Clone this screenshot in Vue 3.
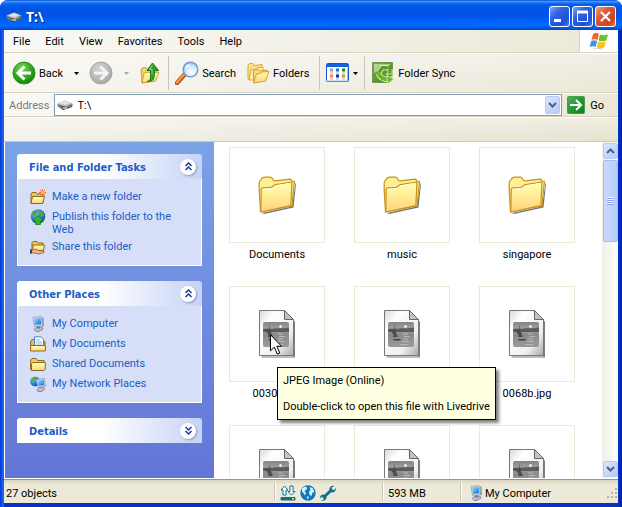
<script setup>
import { ref } from 'vue'

const menus = ['File', 'Edit', 'View', 'Favorites', 'Tools', 'Help']
const address = ref('T:\\')

const panels = [
  {
    title: 'File and Folder Tasks',
    open: true,
    items: [
      { icon: 'new-folder', text: 'Make a new folder' },
      { icon: 'publish', text: 'Publish this folder to the Web' },
      { icon: 'share', text: 'Share this folder' },
    ],
  },
  {
    title: 'Other Places',
    open: true,
    items: [
      { icon: 'computer', text: 'My Computer' },
      { icon: 'documents', text: 'My Documents' },
      { icon: 'shared', text: 'Shared Documents' },
      { icon: 'network', text: 'My Network Places' },
    ],
  },
  { title: 'Details', open: false, items: [] },
]

const files = [
  { name: 'Documents', type: 'folder' },
  { name: 'music', type: 'folder' },
  { name: 'singapore', type: 'folder' },
  { name: '0030b.jpg', type: 'jpeg', hovered: true },
  { type: 'jpeg' },
  { name: '0068b.jpg', type: 'jpeg' },
  { type: 'jpeg' },
  { type: 'jpeg' },
  { type: 'jpeg' },
]
</script>

<template>
  <svg class="sprite" aria-hidden="true">
    <defs>
      <linearGradient id="g-folder" x1="0" y1="0" x2="0" y2="1">
        <stop offset="0" stop-color="#ffffb8" /><stop offset="0.4" stop-color="#fff09a" /><stop offset="1" stop-color="#ffd27a" />
      </linearGradient>
      <linearGradient id="g-page" x1="0" y1="0" x2="1" y2="1">
        <stop offset="0" stop-color="#d8d8d8" /><stop offset="0.25" stop-color="#ffffff" /><stop offset="0.7" stop-color="#f0f0f0" /><stop offset="1" stop-color="#a8a8a8" />
      </linearGradient>
      <linearGradient id="g-photo" x1="0" y1="0" x2="0" y2="1">
        <stop offset="0" stop-color="#838383" /><stop offset="0.3" stop-color="#a4a4a4" /><stop offset="0.5" stop-color="#8a8a8a" /><stop offset="1" stop-color="#9a9a9a" />
      </linearGradient>
      <radialGradient id="g-green" cx="0.4" cy="0.3" r="0.75">
        <stop offset="0" stop-color="#7fd862" /><stop offset="0.5" stop-color="#37b021" /><stop offset="1" stop-color="#0f7e0d" />
      </radialGradient>
      <radialGradient id="g-gray" cx="0.4" cy="0.3" r="0.8">
        <stop offset="0" stop-color="#d4d4d2" /><stop offset="1" stop-color="#a3a3a1" />
      </radialGradient>
      <radialGradient id="g-lens" cx="0.6" cy="0.7" r="0.8">
        <stop offset="0" stop-color="#ffffff" /><stop offset="0.5" stop-color="#cfeaff" /><stop offset="1" stop-color="#79b5f0" />
      </radialGradient>
      <linearGradient id="g-screen" x1="0" y1="0" x2="1" y2="1">
        <stop offset="0" stop-color="#a8e0ff" /><stop offset="0.6" stop-color="#3b9df2" /><stop offset="1" stop-color="#1762d8" />
      </linearGradient>
      <radialGradient id="g-earth" cx="0.35" cy="0.3" r="0.8">
        <stop offset="0" stop-color="#7ac6f8" /><stop offset="0.6" stop-color="#2271cf" /><stop offset="1" stop-color="#0d3f8c" />
      </radialGradient>
      <linearGradient id="g-sync" x1="0" y1="0" x2="1" y2="1">
        <stop offset="0" stop-color="#7fae45" /><stop offset="1" stop-color="#3f8418" />
      </linearGradient>
      <linearGradient id="g-go" x1="0" y1="0" x2="1" y2="1">
        <stop offset="0" stop-color="#4fae5e" /><stop offset="0.6" stop-color="#1c9727" /><stop offset="1" stop-color="#0b7d12" />
      </linearGradient>
    </defs>

    <symbol id="i-drive" viewBox="0 0 16 16">
      <path d="M1 9l5 4 9-3v-2L10 6z" fill="#26282b" />
      <path d="M0.5 6.5L8 3.5l7.5 3-5.5 3.5-5-1z" fill="#b6b8ba" />
      <path d="M1.5 6.5L8 4l5.500 2-5 2z" fill="#e1e2e2" />
      <path d="M0.5 6.6l4.5 2.9v2.700L0.5 9z" fill="#77797c" />
      <path d="M5 9.5l5 .6 5.5-3.400v2.500L10 12l-5 .2z" fill="#65676a" />
      <path d="M6 11h4" stroke="#f4f4f4" />
      <path d="M12 9.5h1.5" stroke="#4fd13a" />
    </symbol>

    <symbol id="i-flag" viewBox="0 0 20 18">
      <path d="M4 2C6 .8 8 .8 10 2L8.500 8C6.500 7 4.500 7 2.500 8z" fill="#f0652b" />
      <path d="M11 2.500c2 1 4 1 8 0L17.300 8.600c-2.600 1-5 1-7.800-.2z" fill="#72bf2e" />
      <path d="M2.200 9c2-1 4-1 6 .1L6.600 15C4.800 14 2.600 14 .5 15z" fill="#3f93e8" />
      <path d="M9.200 9.500c2.500 1 5 1 7.700.1l-1.600 5.900c-2.500 1-5 1.400-7.700-.2z" fill="#fac31d" />
      <path d="M4 17c3-1 6-1 9 .5" stroke="#b9b9b9" stroke-width=".7" fill="none" />
    </symbol>

    <symbol id="i-back" viewBox="0 0 24 24">
      <circle cx="12" cy="12" r="11" fill="url(#g-green)" stroke="#2b8c21" />
      <path d="M12.500 5.500L6 12l6.500 6.500M6.500 12H19" fill="none" stroke="#fff" stroke-width="3" />
    </symbol>
    <symbol id="i-forward" viewBox="0 0 24 24">
      <circle cx="12" cy="12" r="11" fill="url(#g-gray)" stroke="#a5a5a3" />
      <path d="M11.500 5.500L18 12l-6.500 6.500M17.500 12H5" fill="none" stroke="#f5f5f3" stroke-width="3" />
    </symbol>
    <symbol id="i-up" viewBox="0 0 24 24">
      <path d="M3 8.500l1-1.500 4-.5 2 2 9-1-1.500 12L4 22z" fill="#f4d267" stroke="#d0a030" />
      <path d="M4 22l2-10 5-1 1.500 1.500L21 11l-3.500 9z" fill="url(#g-folder)" stroke="#d0a030" />
      <path d="M9 20.500c4-.5 3.500-3 3.500-11H9L14.500 2l6 7.500h-4c0 8-.5 11-7.500 11z" fill="#2fa02b" stroke="#17731a" />
      <path d="M14.500 4l-3 4.500H14v5" fill="none" stroke="#8ade78" />
    </symbol>
    <symbol id="i-search" viewBox="0 0 24 24">
      <path d="M2 22l8-9" stroke="#a84f18" stroke-width="4.500" stroke-linecap="round" />
      <path d="M2 21.500l7-8" stroke="#f29a4a" stroke-width="2.500" stroke-linecap="round" />
      <circle cx="15.500" cy="8.500" r="7.300" fill="url(#g-lens)" stroke="#7998cf" stroke-width="1.500" />
      <path d="M11 7.500c.5-2 2-3.500 4-3.500" stroke="#fff" stroke-width="1.500" fill="none" />
    </symbol>
    <symbol id="i-folders" viewBox="0 0 24 24">
      <path d="M2 18V4l1.500-1.500H7L8.500 4.500 16 3.500V9L4 18z" fill="#fbe08a" stroke="#dba93a" />
      <path d="M3 19L5 9l4-.5L10.500 7 17 6v4L8 19z" fill="#fff0ac" stroke="#dba93a" />
      <path d="M7.500 21V10L9 8.500h3.500l1.500 1.500 7-1V12L10 21z" fill="#f9d974" stroke="#d49f30" />
      <path d="M7.500 22L10.500 13l4-.5 1.500-1.500 7-.5L19.500 20z" fill="url(#g-folder)" stroke="#d49f30" />
    </symbol>
    <symbol id="i-views" viewBox="0 0 24 20">
      <rect x=".5" y=".5" width="22" height="18" rx="1" fill="#fff" stroke="#1656c8" />
      <path d="M1 1h21v3H1z" fill="#175fdc" />
      <path d="M21.500 5v13H2" stroke="#9bbcf2" fill="none" />
      <path d="M4 5.500h3v3H4z" fill="#9696cc" /><path d="M10 5.500h3v3h-3z" fill="#0d78d8" /><path d="M16 5.500h3v3h-3z" fill="#0e8a12" />
      <path d="M4 11.500h3v3H4z" fill="#ff7d51" /><path d="M10 11.500h3v3h-3z" fill="#0931a0" /><path d="M16 11.500h3v3h-3z" fill="#d4a000" />
      <path d="M4 10h3M10 10h3M16 10h3M4 16h3M10 16h3M16 16h3" stroke="#b5b5b5" />
    </symbol>
    <symbol id="i-sync" viewBox="0 0 24 24">
      <path d="M1.500 1.500h20v13l-4 7h-16z" fill="url(#g-sync)" stroke="#6f9550" />
      <path d="M3 3h17l-4 2.500H9l-6 7z" fill="#cfe3b4" opacity=".7" />
      <path d="M7.500 12l4-5.500 6 .5" fill="none" stroke="#f0f8e2" stroke-width="5" />
      <path d="M7.500 12l4-5.500 6 .5" fill="none" stroke="#5a9f22" stroke-width="3.400" />
      <path d="M19 8v6" fill="none" stroke="#f0f8e2" stroke-width="5" />
      <path d="M19 7v7" fill="none" stroke="#5a9f22" stroke-width="3.400" />
      <path d="M14.500 13h8.500l-4 4z" fill="#5a9f22" stroke="#f0f8e2" stroke-width=".7" />
      <path d="M7.500 12.500c1.500 4 4.500 6 10 6" fill="none" stroke="#f0f8e2" stroke-width="5.500" />
      <path d="M7.500 12.500c1.500 4 4.500 6 10 6" fill="none" stroke="#6db22e" stroke-width="4" />
      <path d="M16 14.500l7 3.500-6.500 5z" fill="#6db22e" stroke="#f0f8e2" stroke-width=".7" />
    </symbol>

    <symbol id="i-new-folder" viewBox="0 0 16 16">
      <path d="M1 14V5l1-1.500h4L7.500 5H13v9z" fill="#e9c65a" stroke="#8a6a1c" />
      <path d="M1 14.500L2.500 7.500H14.500L12.500 14.500z" fill="url(#g-folder)" stroke="#8a6a1c" />
      <path d="M12.500 0v7M9 3.500h7M10 1l5 5M15 1l-5 5" stroke="#f0643c" />
      <circle cx="12.500" cy="3.500" r="1.500" fill="#ffd23c" />
    </symbol>
    <symbol id="i-publish" viewBox="0 0 16 16">
      <circle cx="8" cy="7.500" r="7.300" fill="url(#g-earth)" />
      <path d="M2 3l4-2 2 2-2 3-3 1zM9 2l4 1 1.500 4-3 1-3-3z" fill="#4da838" />
      <path d="M8 6.500l5.500 5.500h-3v3.500h-5V12h-3z" fill="#35b52d" stroke="#1b7a20" stroke-width=".8" />
    </symbol>
    <symbol id="i-share" viewBox="0 0 16 16">
      <path d="M2 11V3.500L3 2.500h4L8.500 4H13v7z" fill="#e9c65a" stroke="#8a6a1c" />
      <path d="M2 11.500L3.500 6H14.500l-1 5.500z" fill="url(#g-folder)" stroke="#8a6a1c" />
      <path d="M0 11h3l2-1 4 1.500 5 .5v1.500L9 15l-4-1H0z" fill="#eeb58a" stroke="#7b4a28" stroke-width=".7" />
      <path d="M0 10.500h2v4H0z" fill="#364667" />
    </symbol>
    <symbol id="i-computer" viewBox="0 0 16 16">
      <path d="M3 1.500L11 .5l1.500 9-8 1z" fill="#d8dde8" stroke="#8b93a9" stroke-width=".7" />
      <path d="M4 2.500l6.300-.8 1 6.500-6.300.8z" fill="url(#g-screen)" />
      <path d="M12 1l1.500 1 .5 8-1.500.5z" fill="#8b93a9" />
      <path d="M4 13.500l3-2.500h5l1 2-4 2.500H6z" fill="#b8bdcd" stroke="#666f8a" stroke-width=".7" />
      <path d="M7 10.500h3v2H7z" fill="#717a96" />
    </symbol>
    <symbol id="i-documents" viewBox="0 0 16 16">
      <path d="M.6 14V5.500L2 3.500h3l1.500 2H15v8.500z" fill="#e5bd50" stroke="#8a6a1c" />
      <path d="M4.500 10V.8h6.500l2.500 2.500V10z" fill="#fff" stroke="#4f80c4" />
      <path d="M6 4h4M6 6h6M6 8h6" stroke="#6fa6e5" stroke-width=".8" />
      <path d="M.6 15V9.500H15.400V15z" fill="url(#g-folder)" stroke="#8a6a1c" />
    </symbol>
    <symbol id="i-shared" viewBox="0 0 16 16">
      <path d="M.6 13.500V4L2 2.500h4L7.500 4.500H14v9z" fill="#eccb66" stroke="#8a6a1c" />
      <path d="M1.500 14.500V8L3 6.500h12.300V13l-1.300 1.500z" fill="url(#g-folder)" stroke="#8a6a1c" />
    </symbol>
    <symbol id="i-network" viewBox="0 0 16 16">
      <circle cx="5" cy="5.500" r="4.800" fill="url(#g-earth)" />
      <path d="M1.500 3l3-2.500L6 2 4.500 5 3 6zM2 7l2 1v2z" fill="#54b53b" />
      <path d="M6 3.500l8.500-1 1 8-7.500 1z" fill="#e1e5ee" stroke="#7e88a4" stroke-width=".7" />
      <path d="M7.200 4.600l6.500-.8.7 5.500-5.700.8z" fill="url(#g-screen)" />
      <path d="M7 14l2.500-2.500h4l1 2-3 2H8z" fill="#b8bdcd" stroke="#666f8a" stroke-width=".7" />
    </symbol>

    <symbol id="i-folder" viewBox="0 0 38 38">
      <path d="M4 37l30-6.500L37.500 7l.5 1-2.500 23.500L6 38z" fill="#333" opacity=".7" />
      <path d="M2.500 36L1.200 14V7C1.500 5 2.200 4 3.200 3.500 4 1.500 5.500 1.200 7 1.200h5.500c1.700 0 2 1.500 3 3.300l1.500.3L32 3.200c1 0 1.500.5 1.500 1.800l3 .3L34 29.800z" fill="#ffee96" stroke="#c6931a" stroke-width="1.200" stroke-linejoin="round" />
      <path d="M3.200 13.500c.3-1.200 1-1.500 2-1.600l8-.6c1.500-.3 2.500-2.300 4.300-2.700L34 6 32.800 29.700 2.800 36z" fill="url(#g-folder)" stroke="#c6931a" stroke-width="1.200" stroke-linejoin="round" />
      <path d="M4.500 14c0-.7.500-1 1.200-1l8-.6c1.500-.3 2.500-2.300 4.300-2.700l13.500-2.200" fill="none" stroke="#fffddd" />
    </symbol>

    <symbol id="i-jpeg" viewBox="0 0 36 48">
      <path d="M2 46.500h32.500V10l1.500 2v35.500H3z" fill="#666" opacity=".85" />
      <path d="M.5.500h25l9 9v36H.5z" fill="url(#g-page)" stroke="#777" />
      <path d="M25.500.5v9h9z" fill="#c3c3c3" stroke="#666" />
      <rect x="4" y="12" width="26" height="25" rx="2" fill="url(#g-photo)" />
      <path d="M4 19c4-1 7 .5 11-.5s8 .5 15-1v4.500H4z" fill="#5c5c5c" />
      <path d="M10 14l3 13H9c1.500-4 1.500-9 1-13z" fill="#484848" />
      <path d="M5 19l6 1 3 7-3-.5z" fill="#4e4e4e" />
      <path d="M9 29h8l-1 1.500h-6z" fill="#444" />
      <circle cx="21.500" cy="16.500" r="1.300" fill="#fff" />
      <path d="M19 24h5M20 26.500h6M19 29h5M18 31.500h7M16 34.500h8" stroke="#b9b9b9" />
    </symbol>

    <symbol id="i-transfer" viewBox="0 0 16 16">
      <path d="M4.500 1L8 5H6v5H3V5H1zM11.500 10L8 6.500h2V1h3v5.500h2z" fill="#fff" stroke="#0e6f8d" />
      <rect x=".5" y="12" width="15" height="3.500" rx="1" fill="#0e6f8d" />
      <path d="M12 13h2v1.500h-2z" fill="#c8f36b" />
    </symbol>
    <symbol id="i-globe" viewBox="0 0 16 16">
      <circle cx="8" cy="8" r="7.700" fill="#1277b9" />
      <path d="M2 3.500l3-2 2.500 1.500L6 5 4.500 6 6 8l-1 2.500L3.500 8 2 6.500zM9.500 2l3 1 2 4-2 .5-1 3.500-2-1-.5-3 1.500-2zM7 11l2 1-1.500 3z" fill="#d9f1fb" />
    </symbol>
    <symbol id="i-wrench" viewBox="0 0 16 16">
      <path d="M3 13L12 4.500" stroke="#0e6f8d" stroke-width="3" />
      <path d="M14.500 1l-3 1.500.5 2 2 .8 2-2.300c.3 3-2 5-4.500 4.200L9.500 5C9 2 11.500-.3 14.500 1zM1 15.500l3-1-.3-2-1.700-1L0 13.500c-.3-3 2-4.500 4-4L6.500 12c.2 3-2.500 4.600-5.500 3.500z" fill="#0e6f8d" />
    </symbol>
  </svg>

  <div class="window">
    <header class="titlebar">
      <svg class="icon16"><use href="#i-drive" /></svg>
      <h1 class="title">T:\</h1>
      <button class="caption" aria-label="Minimize">
        <svg viewBox="0 0 19 19"><path d="M4 13.500h7" stroke="#fff" stroke-width="3" /></svg>
      </button>
      <button class="caption" aria-label="Maximize">
        <svg viewBox="0 0 19 19"><path d="M4.500 4v10.500h10V4" stroke="#fff" fill="none" /><path d="M4 5h11" stroke="#fff" stroke-width="3" /></svg>
      </button>
      <button class="caption close" aria-label="Close">
        <svg viewBox="0 0 19 19"><path d="M5 5l9 9M14 5l-9 9" stroke="#fff" stroke-width="2.200" /></svg>
      </button>
    </header>

    <div class="frame">
      <nav class="menubar">
        <button v-for="m in menus" :key="m" class="menu">{{ m }}</button>
        <div class="brand"><svg class="flag"><use href="#i-flag" /></svg></div>
      </nav>

      <div class="toolbar">
        <button class="tool"><svg class="icon24"><use href="#i-back" /></svg>Back</button>
        <button class="drop" aria-label="Back history"><svg viewBox="0 0 5 3"><path d="M0 0h5L2.500 3z" /></svg></button>
        <button class="tool" aria-label="Forward" disabled><svg class="icon24"><use href="#i-forward" /></svg></button>
        <button class="drop faded" aria-label="Forward history" disabled><svg viewBox="0 0 5 3"><path d="M0 0h5L2.500 3z" /></svg></button>
        <button class="tool up" aria-label="Up"><svg class="icon24"><use href="#i-up" /></svg></button>
        <span class="divider"></span>
        <button class="tool search"><svg class="icon24"><use href="#i-search" /></svg>Search</button>
        <button class="tool folders"><svg class="icon24"><use href="#i-folders" /></svg>Folders</button>
        <span class="divider"></span>
        <button class="tool views" aria-label="Views"><svg class="icon24"><use href="#i-views" /></svg><svg class="tick" viewBox="0 0 5 3"><path d="M0 0h5L2.500 3z" /></svg></button>
        <span class="divider"></span>
        <button class="tool sync"><svg class="icon24"><use href="#i-sync" /></svg>Folder Sync</button>
      </div>

      <form class="addressbar" @submit.prevent>
        <label for="address">Address</label>
        <div class="combo">
          <svg class="icon16"><use href="#i-drive" /></svg>
          <input id="address" v-model="address" type="text" />
          <button type="button" class="sbtn" aria-label="Show addresses">
            <svg viewBox="0 0 9 6"><path d="M1 1l3.500 3.500L8 1" /></svg>
          </button>
        </div>
        <button class="go">
          <svg viewBox="0 0 18 18"><rect x=".5" y=".5" width="17" height="17" rx="1" fill="url(#g-go)" stroke="#4a9a52" /><path d="M3 9h11M9 4l5 5-5 5" stroke="#fff" stroke-width="2" fill="none" /></svg>Go
        </button>
      </form>

      <div class="band"></div>

      <div class="body">
        <aside class="sidebar">
          <section v-for="p in panels" :key="p.title" class="panel">
            <div class="panel-head">
              <h2>{{ p.title }}</h2>
              <button class="chevron" :class="{ down: !p.open }" :aria-label="p.title">
                <svg viewBox="0 0 9 9"><path d="M1.500 4l3-3 3 3M1.500 8l3-3 3 3" /></svg>
              </button>
            </div>
            <ul v-if="p.open" class="panel-body">
              <li v-for="i in p.items" :key="i.text">
                <svg class="icon16"><use :href="'#i-' + i.icon" /></svg>
                <a href="#">{{ i.text }}</a>
              </li>
            </ul>
          </section>
        </aside>

        <main class="files">
          <div v-for="(f, n) in files" :key="n" class="file">
            <div class="thumb">
              <svg v-if="f.type === 'folder'" class="folder"><use href="#i-folder" /></svg>
              <svg v-else class="jpeg"><use href="#i-jpeg" /></svg>
            </div>
            <span v-if="f.name" class="name">{{ f.name }}</span>
            <template v-if="f.hovered">
              <svg class="cursor" viewBox="0 0 12 21">
                <path d="M.5.800v16l3.800-3.600 3 6.800 2.500-1-3-6.700h4.800z" fill="#fff" stroke="#000" />
              </svg>
              <div class="tooltip" role="tooltip">
                <p>JPEG Image (Online)</p>
                <p>Double-click to open this file with Livedrive</p>
              </div>
            </template>
          </div>
        </main>

        <div class="scrollbar">
          <button class="sbtn" aria-label="Scroll up"><svg viewBox="0 0 9 6"><path d="M1 5l3.500-3.500L8 5" /></svg></button>
          <div class="handle"><span></span></div>
          <button class="sbtn last" aria-label="Scroll down"><svg viewBox="0 0 9 6"><path d="M1 1l3.500 3.500L8 1" /></svg></button>
        </div>
      </div>

      <footer class="status">
        <div class="cell">27 objects</div>
        <div class="cell icons">
          <svg class="icon16"><use href="#i-transfer" /></svg>
          <svg class="icon16"><use href="#i-globe" /></svg>
          <svg class="icon16"><use href="#i-wrench" /></svg>
        </div>
        <div class="cell">593 MB</div>
        <div class="cell place">
          <svg class="icon16"><use href="#i-computer" /></svg>My Computer
          <svg class="grip" viewBox="0 0 12 12"><path d="M9 1h2v2H9zM5 5h2v2H5zM9 5h2v2H9zM1 9h2v2H1zM5 9h2v2H5zM9 9h2v2H9z" /></svg>
        </div>
      </footer>
    </div>
  </div>
</template>

<style>
body {
  margin: 0;
  background: #fff;
}
</style>

<style scoped>
.sprite {
  position: absolute;
  width: 0;
  height: 0;
}

.window {
  display: flex;
  flex-direction: column;
  box-sizing: border-box;
  height: 100vh;
  overflow: hidden;
  border-radius: 8px 8px 0 0;
  background: linear-gradient(90deg, #0831d9, #166aee 3px, #0855dd 5px, #0855dd 50%, #0347e0 99%, #001da0);
  font: 11px/13px Roboto, "Noto Sans", sans-serif;
  color: #000;
}

button {
  display: flex;
  align-items: center;
  padding: 0;
  border: 0;
  background: none;
  font: inherit;
  color: inherit;
}

.icon16 {
  flex: none;
  width: 16px;
  height: 16px;
}

.icon24 {
  flex: none;
  width: 24px;
  height: 24px;
}

/* Title bar */
.titlebar {
  display: flex;
  align-items: center;
  gap: 2px;
  box-sizing: border-box;
  height: 30px;
  padding: 3px 6px 0;
  background: linear-gradient(#0a4cd0 0, #3d95ff 5%, #1c7bf8 9%, #0262ee 14%, #0054e3 25%, #0055eb 56%, #0264fb 72%, #0268fd 84%, #0058e4 94%, #0043c0 100%);
}

.title {
  flex: 1;
  margin: 0;
  padding: 0 0 0 2px;
  font: bold 14px/18px "Noto Sans", sans-serif;
  color: #fff;
  text-shadow: 1px 1px 1px #0a1883;
}

.caption {
  box-sizing: border-box;
  width: 21px;
  height: 21px;
  border: 1px solid #fff;
  border-radius: 3px;
  background: linear-gradient(135deg, #7da5f7 0, #2f62e3 35%, #1f50d5 75%, #3f7cf2 100%);
}

.caption svg {
  width: 19px;
  height: 19px;
}

.caption.close {
  background: linear-gradient(135deg, #f0a088 0, #e05a36 35%, #d1411a 75%, #e8704a 100%);
}

/* Frame */
.frame {
  display: flex;
  flex: 1;
  flex-direction: column;
  min-height: 0;
  margin: 0 4px;
  border-bottom: 4px solid #0831c0;
  background: #ece9d8;
}

.menubar {
  display: flex;
  height: 22px;
  border-bottom: 1px solid #d8d2bd;
  background: linear-gradient(90deg, #f8f8f6, #ece9d8);
}

.menu {
  padding: 0 7px 0 8px;
}

.menu:first-child {
  margin-left: 1px;
}

.brand {
  display: flex;
  align-items: center;
  justify-content: center;
  width: 38px;
  margin-left: auto;
  border-left: 1px solid #d8d2bd;
  background: #fff;
}

.flag {
  width: 20px;
  height: 18px;
}

.toolbar {
  display: flex;
  align-items: center;
  height: 38px;
  border-top: 1px solid #fff;
  padding-left: 8px;
  border-bottom: 1px solid #d8d2bd;
  background: linear-gradient(90deg, rgba(255, 255, 255, 0.6), rgba(255, 255, 255, 0)), linear-gradient(#f1efe6, #ebe8d8);
}

.tool {
  gap: 3px;
}

.drop {
  justify-content: center;
  width: 26px;
  height: 24px;
}

.drop svg,
.tick {
  width: 5px;
  height: 3px;
}

.drop:not(.faded) svg,
.views .tick {
  flex: none;
}

.faded {
  opacity: 0.3;
}

.divider {
  width: 1px;
  height: 34px;
  margin: 0 6px;
  background: #c9c5b2;
}

.faded + .up {
  margin-left: -1px;
}

.folders {
  margin-left: 10px;
}

.folders + .divider {
  margin-left: 10px;
}

.addressbar {
  display: flex;
  align-items: center;
  gap: 5px;
  height: 22px;
  padding: 0 14px 0 5px;
  border-top: 1px solid #fff;
  border-bottom: 1px solid #d8d2bd;
  background: linear-gradient(90deg, #f8f8f6, #ece9d8);
}

.addressbar label {
  color: #7d7a72;
}

.combo {
  display: flex;
  flex: 1;
  align-items: center;
  gap: 4px;
  box-sizing: border-box;
  height: 22px;
  padding: 1px 1px 1px 2px;
  border: 1px solid #7f9db9;
  background: #fff;
}

.combo input {
  flex: 1;
  min-width: 0;
  padding: 0;
  border: 0;
  outline: 0;
  background: none;
  font: inherit;
  color: inherit;
}

.sbtn {
  flex: none;
  justify-content: center;
  box-sizing: border-box;
  width: 15px;
  height: 16px;
  border: 1px solid #b7c9f5;
  border-radius: 2px;
  background: linear-gradient(135deg, #dbe5ff, #b5cafb);
}

.combo .sbtn {
  height: 18px;
}

.sbtn svg {
  width: 9px;
  height: 6px;
}

.sbtn path {
  fill: none;
  stroke: #4d6185;
  stroke-width: 2;
}

.go {
  gap: 5px;
}

.go svg {
  width: 18px;
  height: 18px;
}

.band {
  height: 23px;
  border-top: 1px solid #fff;
  border-bottom: 1px solid #cfcab4;
  background: linear-gradient(90deg, rgba(255, 255, 255, 0.5), rgba(255, 255, 255, 0)), linear-gradient(#f0ede2, #e6e3d0);
}

/* Body */
.body {
  display: flex;
  flex: 1;
  min-height: 0;
  border-left: 1px solid #fff;
  border-bottom: 1px solid #fff;
  background: #fff;
}

.sidebar {
  display: flex;
  flex: none;
  flex-direction: column;
  gap: 15px;
  box-sizing: border-box;
  width: 209px;
  padding: 12px;
  background: linear-gradient(#7ba2e7, #6375d6);
}

.panel-head {
  display: flex;
  align-items: center;
  justify-content: space-between;
  height: 25px;
  padding: 0 6px 0 12px;
  border-radius: 3px 3px 0 0;
  background: linear-gradient(90deg, #fff 0, #fff 45%, #c6d3f7 100%);
}

.panel-head h2 {
  margin: 0;
  padding-top: 2px;
  font: bold 11px/13px "DejaVu Sans Condensed", sans-serif;
  color: #215dc6;
}

.chevron {
  justify-content: center;
  width: 16px;
  height: 16px;
  border-radius: 50%;
  background: #fff;
  box-shadow: 1px 1px 2px #8b9bcb;
}

.chevron svg {
  width: 9px;
  height: 9px;
}

.chevron path {
  fill: none;
  stroke: #173f92;
  stroke-width: 1.5;
}

.down svg {
  transform: rotate(180deg);
}

.panel-body {
  display: flex;
  flex-direction: column;
  gap: 4px;
  margin: 0;
  padding: 10px 12px;
  border: 1px solid #fff;
  border-top: 0;
  background: #d6dff7;
  list-style: none;
}

.panel-body li {
  display: flex;
  gap: 6px;
}

.panel-body a {
  padding-top: 1px;
  margin-bottom: -1px;
  color: #215dc6;
  text-decoration: none;
}

.files {
  display: grid;
  flex: 1;
  grid-template-columns: repeat(auto-fill, 96px);
  align-content: start;
  gap: 25px 29px;
  min-width: 0;
  padding: 5px 0 0 15px;
  overflow: hidden;
}

.file {
  position: relative;
  display: flex;
  flex-direction: column;
  gap: 5px;
  text-align: center;
}

.thumb {
  display: flex;
  align-items: center;
  justify-content: center;
  box-sizing: border-box;
  height: 96px;
  border: 1px solid #ece9d8;
}

.folder {
  width: 38px;
  height: 38px;
}

.jpeg {
  width: 36px;
  height: 48px;
}

.cursor {
  position: absolute;
  left: 41px;
  top: 48px;
  width: 12px;
  height: 21px;
}

.tooltip {
  position: absolute;
  left: 48px;
  top: 81px;
  z-index: 1;
  box-sizing: border-box;
  padding: 6px 5px;
  border: 1px solid #000;
  background: #ffffe1;
  box-shadow: 3px 3px 3px rgba(0, 0, 0, 0.5);
  text-align: left;
  white-space: nowrap;
}

.tooltip p {
  margin: 0;
}

.tooltip p + p {
  margin-top: 13px;
}

.scrollbar {
  display: flex;
  flex-direction: column;
  align-items: center;
  gap: 1px;
  box-sizing: border-box;
  width: 16px;
  padding: 1px 0;
  background: linear-gradient(90deg, #f0efe8, #fefefb);
}

.handle {
  display: flex;
  align-items: center;
  justify-content: center;
  box-sizing: border-box;
  width: 15px;
  height: 82px;
  border: 1px solid #a4baf0;
  border-radius: 2px;
  background: linear-gradient(90deg, #cbd9fe, #b8cbfb);
}

.handle span {
  width: 7px;
  height: 8px;
  background: repeating-linear-gradient(#f0f5ff 0, #f0f5ff 1px, #8ca8e8 1px, #8ca8e8 2px);
}

.last {
  margin-top: auto;
}

/* Status bar */
.status {
  display: grid;
  grid-template-columns: 1fr 108px 78px 157px;
  align-items: center;
  box-sizing: border-box;
  height: 24px;
  border-top: 1px solid #98968a;
  background: linear-gradient(#d9d5c3, #ece9d8 20%);
}

.cell {
  display: flex;
  align-items: center;
  height: 16px;
  padding: 3px 0 0 4px;
  border-left: 1px solid #fff;
  box-shadow: -1px 0 #c9c5b2;
}

.cell:first-child {
  padding-left: 2px;
  border-left: 0;
  box-shadow: none;
}

.icons {
  gap: 4px;
}

.place {
  gap: 1px;
}

.cell.place {
  padding-left: 6px;
}

.grip {
  width: 12px;
  height: 12px;
  margin-left: auto;
  fill: #b8b4a2;
}
</style>
